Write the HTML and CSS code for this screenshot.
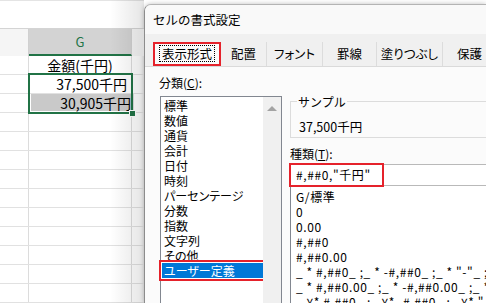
FILE: index.html
```html
<!DOCTYPE html>
<html lang="ja">
<head>
    <meta charset="UTF-8">
    <meta name="viewport" content="width=device-width, initial-scale=1.0">
    <title>セルの書式設定</title>
    <link rel="stylesheet" href="styles.css">
</head>
<body>
    <div class="screen">
        <div class="sheet">
            <div class="formula-gap"></div>
            <div class="col-head">
                <div class="cell col-f"></div>
                <div class="cell col-g active">G</div>
                <div class="cell col-h"></div>
            </div>
            <div class="row">
                <div class="cell col-f"></div>
                <div class="cell col-g center">金額(千円)</div>
                <div class="cell col-h"></div>
            </div>
            <div class="row">
                <div class="cell col-f"></div>
                <div class="cell col-g num">37,500千円</div>
                <div class="cell col-h"></div>
            </div>
            <div class="row">
                <div class="cell col-f"></div>
                <div class="cell col-g num picked">30,905千円</div>
                <div class="cell col-h"></div>
            </div>
            <div class="row"><div class="cell col-f"></div><div class="cell col-g"></div><div class="cell col-h"></div></div>
            <div class="row"><div class="cell col-f"></div><div class="cell col-g"></div><div class="cell col-h"></div></div>
            <div class="row"><div class="cell col-f"></div><div class="cell col-g"></div><div class="cell col-h"></div></div>
            <div class="row"><div class="cell col-f"></div><div class="cell col-g"></div><div class="cell col-h"></div></div>
            <div class="row"><div class="cell col-f"></div><div class="cell col-g"></div><div class="cell col-h"></div></div>
            <div class="row"><div class="cell col-f"></div><div class="cell col-g"></div><div class="cell col-h"></div></div>
            <div class="row"><div class="cell col-f"></div><div class="cell col-g"></div><div class="cell col-h"></div></div>
            <div class="row"><div class="cell col-f"></div><div class="cell col-g"></div><div class="cell col-h"></div></div>
            <div class="row"><div class="cell col-f"></div><div class="cell col-g"></div><div class="cell col-h"></div></div>
            <div class="row"><div class="cell col-f"></div><div class="cell col-g"></div><div class="cell col-h"></div></div>
            <div class="selection"><span class="fill-handle"></span></div>
            <div class="shade"></div>
        </div>

        <div class="dialog">
            <div class="title">セルの書式設定</div>
            <div class="tabs">
                <div class="tab current"><span class="focus">表示形式</span></div>
                <div class="tab w46">配置</div>
                <div class="tab w56">フォント</div>
                <div class="tab w54">罫線</div>
                <div class="tab w66">塗りつぶし</div>
                <div class="tab w54">保護</div>
            </div>
            <div class="panel">
                <div class="categories">
                    <div class="label">分類(<u>C</u>):</div>
                    <div class="listbox">
                        <ul class="items">
                            <li>標準</li>
                            <li>数値</li>
                            <li>通貨</li>
                            <li>会計</li>
                            <li>日付</li>
                            <li>時刻</li>
                            <li>パーセンテージ</li>
                            <li>分数</li>
                            <li>指数</li>
                            <li>文字列</li>
                            <li>その他</li>
                            <li class="selected">ユーザー定義</li>
                        </ul>
                        <div class="scrollbar"><span class="arrow-up"></span></div>
                    </div>
                </div>
                <div class="details">
                    <fieldset class="sample">
                        <legend>サンプル</legend>
                        <div class="sample-value">37,500千円</div>
                    </fieldset>
                    <div class="label">種類(<u>T</u>):</div>
                    <div class="format-input">
                        #,##0,"千円"
                        <span class="mark"></span>
                    </div>
                    <ul class="formats">
                        <li>G/標準</li>
                        <li>0</li>
                        <li>0.00</li>
                        <li>#,##0</li>
                        <li>#,##0.00</li>
                        <li>_ * #,##0_ ;_ * -#,##0_ ;_ * "-"_ ;_ @_ </li>
                        <li>_ * #,##0.00_ ;_ * -#,##0.00_ ;_ * "-"??_ ;_ @_ </li>
                        <li>_ ¥* #,##0_ ;_ ¥* -#,##0_ ;_ ¥* "-"_ ;_ @_ </li>
                    </ul>
                </div>
            </div>
        </div>
    </div>
</body>
</html>
```

FILE: styles.css
```css
body {
    margin: 0;
    padding: 0;
    font-family: "Noto Sans CJK JP", "Noto Sans", sans-serif;
    color: #000;
    background-color: #fff;
    overflow: hidden;
}
.screen {
    display: flex;
    width: 486px;
    height: 303px;
    overflow: hidden;
}

/* シート側 */
.sheet {
    position: relative;
    width: 144px;
    flex-shrink: 0;
    font-size: 14px;
}
.formula-gap {
    height: 27px;
    border-top: 1px solid #e4e4e4;
    border-bottom: 1px solid #d4d4d4;
}
.col-head, .row {
    display: flex;
}
.col-head {
    height: 27px;
    background-color: #f5f5f5;
}
.row {
    height: 19px;
    box-sizing: border-box;
    border-bottom: 1px solid #e1e1e1;
}
.cell {
    box-sizing: border-box;
    line-height: 18px;
    white-space: nowrap;
}
.col-f {
    width: 29px;
    border-right: 1px solid #dcdcdc;
}
.col-g {
    width: 103px;
    border-right: 1px solid #dcdcdc;
}
.col-h {
    flex-grow: 1;
}
.col-head .cell {
    line-height: 25px;
    border-right-color: #d0d0d0;
}
.col-head .active {
    background-color: #d3d3d3;
    border-bottom: 2px solid #217346;
    color: #217346;
    font-size: 13px;
    text-align: center;
}
.center {
    text-align: center;
}
.num {
    text-align: right;
    padding-right: 4px;
}
.picked {
    background-color: #c9c9c9;
    margin: 0 2px 1px 2px;
    padding-right: 2px;
}
.selection {
    position: absolute;
    left: 28px;
    top: 73px;
    width: 101px;
    height: 37px;
    border: 2px solid #217346;
}
.fill-handle {
    position: absolute;
    right: -5px;
    bottom: -5px;
    width: 5px;
    height: 5px;
    background-color: #217346;
    border: 1px solid #fff;
}
.shade {
    position: absolute;
    top: 0;
    right: 0;
    bottom: 0;
    width: 34px;
    background: linear-gradient(to right, rgba(0, 0, 0, 0), rgba(0, 0, 0, 0.1));
}

/* ダイアログ */
.dialog {
    flex-grow: 1;
    margin-top: 4px;
    border-top: 1px solid #b4b4b4;
    border-left: 1px solid #8c8c8c;
    border-top-left-radius: 7px;
    background-color: #f0f0f0;
    box-shadow: 0 0 5px rgba(0, 0, 0, 0.25);
    font-size: 12px;
    overflow: hidden;
}
.title {
    height: 29px;
    line-height: 29px;
    padding-left: 8px;
    background-color: #f9f9f9;
    font-size: 12.5px;
}
.tabs {
    display: flex;
    padding: 8px 0 0 8px;
    border-bottom: 1px solid #dadada;
    white-space: nowrap;
}
.tab {
    flex-shrink: 0;
    box-sizing: border-box;
    height: 24px;
    line-height: 24px;
    text-align: center;
    border-right: 1px solid #dcdcdc;
    font-size: 12.5px;
    font-feature-settings: "palt";
}
.w46 { width: 46px; }
.w54 { width: 54px; }
.w56 { width: 56px; }
.w66 { width: 66px; }
.tab.current {
    width: 68px;
    background-color: #fbfbfb;
    border: 2px solid #e5222b;
    line-height: 20px;
}
.focus {
    display: inline-block;
    line-height: 15px;
    padding: 0 2px;
    border: 1px dotted #000;
}
.panel {
    display: flex;
    gap: 8px;
    padding: 8px 0 0 14px;
    height: 240px;
    background-color: #fbfbfb;
}
.label {
    line-height: 15px;
}
.categories {
    width: 123px;
    flex-shrink: 0;
}
.listbox {
    display: flex;
    margin: 6px 0 0 1px;
    height: 220px;
    border: 1px solid #828790;
    background-color: #fff;
}
.items {
    flex-grow: 1;
    list-style: none;
    margin: 0;
    padding: 1px 0 0 1px;
    font-feature-settings: "palt";
}
.items li {
    line-height: 15px;
    padding-left: 2px;
    white-space: nowrap;
}
.items .selected {
    background-color: #0078d7;
    color: #fff;
    outline: 2px solid #e5222b;
    outline-offset: 1px;
}
.scrollbar {
    width: 18px;
    background-color: #f0f0f0;
    text-align: center;
}
.arrow-up {
    display: inline-block;
    margin-top: 6px;
    width: 0;
    height: 0;
    border-left: 5px solid transparent;
    border-right: 5px solid transparent;
    border-bottom: 5px solid #a3a3a3;
}
.details {
    flex-grow: 1;
    padding-top: 19px;
    min-width: 0;
}
.sample {
    margin: 0;
    padding: 0 0 3px 6px;
    border: 1px solid #dcdcdc;
    border-right: none;
}
.sample legend {
    padding: 0 1px;
    line-height: 15px;
}
.sample-value {
    margin-top: 10px;
    padding-left: 2px;
    line-height: 15px;
    font-size: 12.5px;
}
.details .label {
    margin-top: 8px;
}
.format-input {
    position: relative;
    margin-top: 3px;
    height: 20px;
    line-height: 20px;
    padding-left: 5px;
    border: 1px solid #b9b9b9;
    border-right: none;
    background-color: #fff;
    white-space: nowrap;
    letter-spacing: 0.6px;
}
.mark {
    position: absolute;
    left: -2px;
    top: -2px;
    width: 91px;
    height: 20px;
    border: 2px solid #e5222b;
}
.formats {
    list-style: none;
    margin: 0;
    padding: 3px 0 0 5px;
    height: 120px;
    border-left: 1px solid #828790;
    background-color: #fff;
    white-space: nowrap;
    overflow: hidden;
    letter-spacing: 0.6px;
}
.formats li {
    line-height: 15px;
}
```
